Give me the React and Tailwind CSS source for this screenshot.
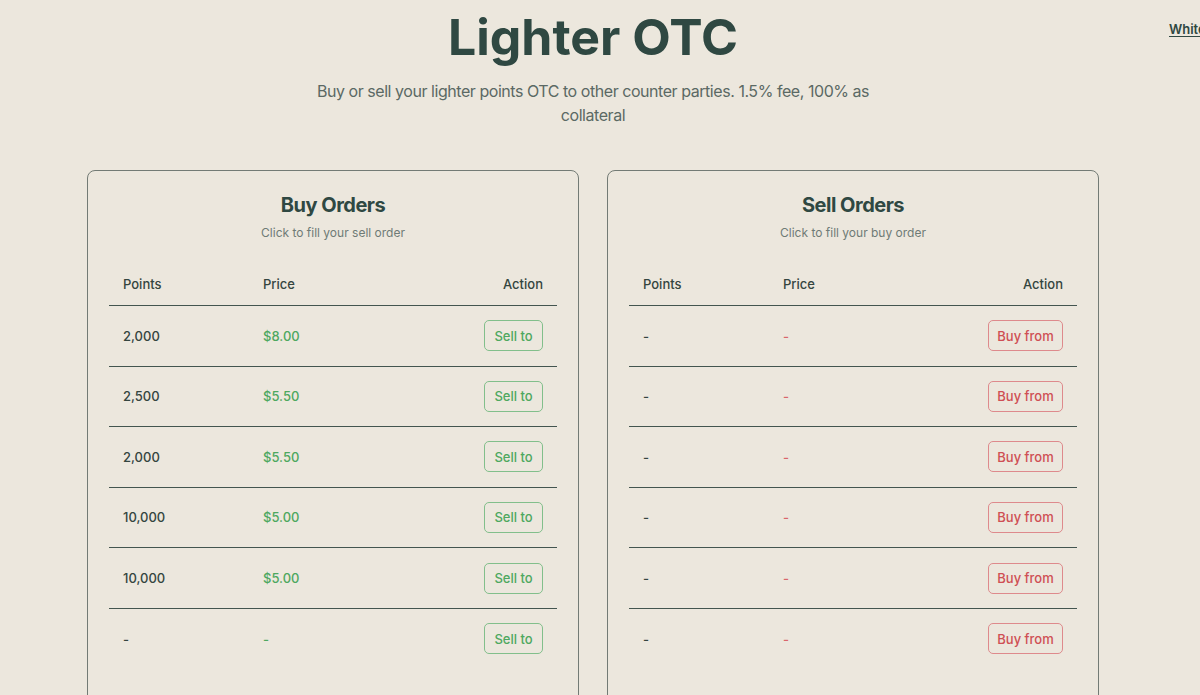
const buyOrders = [
  { points: "2,000", price: "$8.00" },
  { points: "2,500", price: "$5.50" },
  { points: "2,000", price: "$5.50" },
  { points: "10,000", price: "$5.00" },
  { points: "10,000", price: "$5.00" },
  { points: "-", price: "-" },
];

const sellOrders = Array.from({ length: 6 }, () => ({ points: "-", price: "-" }));

const OrderCard = ({ title, subtitle, orders, side }) => {
  const isBuy = side === "buy";
  return (
    <div className="w-[492px] h-[560px] rounded-lg border-[1.5px] border-[#737b75] px-[21px] pt-5">
      <h2 className="text-center text-xl leading-7 font-bold tracking-tight text-[#2f4842]">
        {title}
      </h2>
      <p className="mt-1 text-center text-xs leading-5 text-[#6f7b76]">
        {subtitle}
      </p>

      <div className="mt-5">
        <div className="grid grid-cols-[140px_1fr_auto] px-[14px] py-3 border-b border-[#43554f] text-[13px] leading-[18px] font-medium text-[#34453f]">
          <span>Points</span>
          <span>Price</span>
          <span className="text-right">Action</span>
        </div>

        {orders.map((order, index) => (
          <div
            key={index}
            className={`grid grid-cols-[140px_1fr_auto] items-center px-[14px] py-[14.3px] ${
              index < orders.length - 1 ? "border-b border-[#43554f]" : ""
            }`}
          >
            <span className="pt-px text-[13px] font-medium text-[#34453f]">
              {order.points}
            </span>
            <span
              className={`pt-px text-[13px] font-medium ${
                isBuy ? "text-[#4ea85f]" : "text-[#d9676b]"
              }`}
            >
              {order.price}
            </span>
            <button
              className={`h-[31px] rounded-[5px] border pt-px text-[13px] font-medium ${
                isBuy
                  ? "w-[59px] border-[#82bf8b] text-[#4ea85f]"
                  : "w-[75px] border-[#de8a8c] text-[#cf4f54]"
              }`}
            >
              {isBuy ? "Sell to" : "Buy from"}
            </button>
          </div>
        ))}
      </div>
    </div>
  );
};

const App = () => {
  return (
    <div
      className="relative w-[1200px] h-[695px] overflow-hidden bg-[#ece7dd]"
      style={{ fontFamily: "Inter, 'Noto Sans', sans-serif" }}
    >
      <a
        href="#"
        className="absolute left-[1169px] top-[20px] text-[13px] font-semibold text-[#2f4842] underline underline-offset-2 whitespace-nowrap"
      >
        Whitepaper
      </a>

      <div className="w-[1186px] flex flex-col items-center">
        <h1 className="mt-[12px] text-[50px] leading-[50px] font-bold text-[#2f4842]">
          Lighter OTC
        </h1>
        <p className="mt-[17px] max-w-[600px] text-center text-base tracking-[-0.45px] leading-6 text-[#5b6964]">
          Buy or sell your lighter points OTC to other counter parties. 1.5% fee, 100% as collateral
        </p>

        <div className="mt-[43px] flex gap-[28px]">
          <OrderCard
            title="Buy Orders"
            subtitle="Click to fill your sell order"
            orders={buyOrders}
            side="buy"
          />
          <OrderCard
            title="Sell Orders"
            subtitle="Click to fill your buy order"
            orders={sellOrders}
            side="sell"
          />
        </div>
      </div>
    </div>
  );
};

export default App;
